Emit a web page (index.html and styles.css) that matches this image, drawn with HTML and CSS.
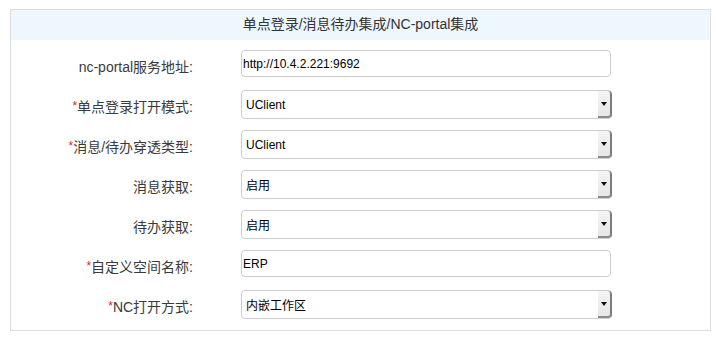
FILE: index.html
```html
<!DOCTYPE html>
<html>
<head>
<meta charset="utf-8">
<link rel="stylesheet" href="styles.css">
</head>
<body>
<div class="panel">
  <div class="panel-head">单点登录/消息待办集成/NC-portal集成</div>
  <div class="form">
    <div class="row">
      <label class="lbl">nc-portal服务地址:</label>
      <div class="ctl"><input class="txt" type="text" value="http://10.4.2.221:9692"></div>
    </div>
    <div class="row">
      <label class="lbl"><span class="req">*</span>单点登录打开模式:</label>
      <div class="ctl sel"><span class="sel-val">UClient</span><span class="sel-btn"><i class="tri"></i></span></div>
    </div>
    <div class="row">
      <label class="lbl"><span class="req">*</span>消息/待办穿透类型:</label>
      <div class="ctl sel"><span class="sel-val">UClient</span><span class="sel-btn"><i class="tri"></i></span></div>
    </div>
    <div class="row">
      <label class="lbl">消息获取:</label>
      <div class="ctl sel"><span class="sel-val">启用</span><span class="sel-btn"><i class="tri"></i></span></div>
    </div>
    <div class="row">
      <label class="lbl">待办获取:</label>
      <div class="ctl sel"><span class="sel-val">启用</span><span class="sel-btn"><i class="tri"></i></span></div>
    </div>
    <div class="row">
      <label class="lbl"><span class="req">*</span>自定义空间名称:</label>
      <div class="ctl"><input class="txt" type="text" value="ERP"></div>
    </div>
    <div class="row">
      <label class="lbl"><span class="req">*</span>NC打开方式:</label>
      <div class="ctl sel"><span class="sel-val">内嵌工作区</span><span class="sel-btn"><i class="tri"></i></span></div>
    </div>
  </div>
</div>
</body>
</html>
```
FILE: styles.css
```css
html, body {
  margin: 0;
  padding: 0;
  background: #fff;
}
body {
  font-family: "Liberation Sans", Arial, "Noto Sans CJK SC", sans-serif;
  color: #333;
  padding: 9px 0 0 10px;
}
.panel {
  width: 701px;
  height: 322px;
  box-sizing: border-box;
  border: 1px solid #dddddd;
}
.panel-head {
  height: 30px;
  line-height: 29px;
  background: #eef6fe;
  text-align: center;
  font-size: 14px;
  color: #333;
}
.form {
  display: flex;
  flex-direction: column;
  padding-top: 10px;
  gap: 11px;
}
.row {
  display: grid;
  grid-template-columns: 182px 370px;
  column-gap: 48px;
  align-items: center;
  height: 29px;
}
.lbl {
  text-align: right;
  font-size: 14px;
  color: #3a3a3a;
  padding-top: 2px;
}
.req {
  color: #e4191c;
  font-size: 12px;
  vertical-align: 2px;
}
.ctl {
  height: 29px;
  display: flex;
  align-items: center;
}
.txt {
  box-sizing: border-box;
  width: 370px;
  height: 27px;
  margin: 0 0 2px 0;
  border: 1px solid #cccccc;
  border-radius: 4px;
  padding: 0 1px 0 1px;
  font-family: "Liberation Sans", Arial, "Noto Sans CJK SC", sans-serif;
  font-size: 12px;
  color: #000;
  outline: none;
  background: #fff;
}
.sel {
  box-sizing: border-box;
  width: 371px;
  border: 1px solid #cccccc;
  border-radius: 4px;
  background: #fff;
  position: relative;
}
.sel-val {
  flex: 1;
  padding-left: 4px;
  font-size: 12px;
  color: #000;
}
.sel-btn {
  width: 14px;
  margin-right: -1px;
  box-sizing: border-box;
  background: linear-gradient(#f4f4f4, #e6e6e6);
  border-right: 2px solid #7d7d7d;
  border-bottom: 2px solid #8a8a8a;
  border-radius: 0 4px 4px 0;
  display: flex;
  align-items: center;
  justify-content: center;
  align-self: stretch;
}
.tri {
  width: 0;
  height: 0;
  border-left: 3px solid transparent;
  border-right: 3px solid transparent;
  border-top: 4px solid #111;
  margin-top: 1px;
}
```
